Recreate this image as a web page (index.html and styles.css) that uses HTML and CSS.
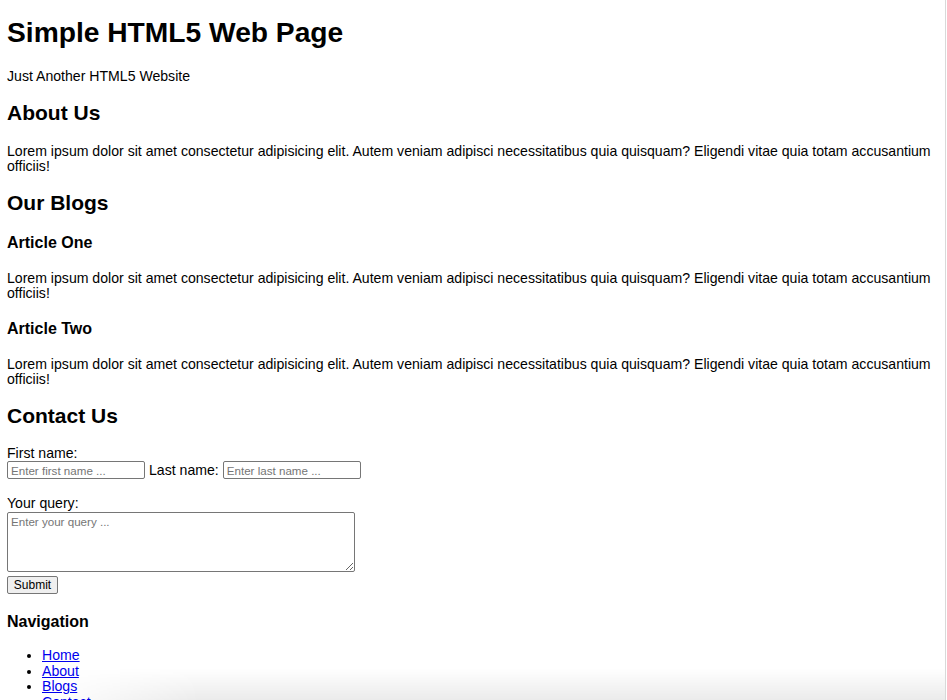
FILE: index.html
```html
<!DOCTYPE html>
<html lang="en">
<head>
<meta charset="utf-8">
<title>Simple HTML5 Web Page</title>
<link rel="stylesheet" href="styles.css">
</head>
<body>
<header class="site-header">
  <h1 class="site-title">Simple HTML5 Web Page</h1>
  <p class="tagline">Just Another HTML5 Website</p>
</header>
<main>
  <section class="block">
    <h2 class="section-title">About Us</h2>
    <p class="text">Lorem ipsum dolor sit amet consectetur adipisicing elit. Autem veniam adipisci necessitatibus quia quisquam? Eligendi vitae quia totam accusantium officiis!</p>
  </section>
  <section class="block">
    <h2 class="section-title">Our Blogs</h2>
    <article>
      <h3 class="article-title">Article One</h3>
      <p class="text">Lorem ipsum dolor sit amet consectetur adipisicing elit. Autem veniam adipisci necessitatibus quia quisquam? Eligendi vitae quia totam accusantium officiis!</p>
    </article>
    <article>
      <h3 class="article-title">Article Two</h3>
      <p class="text">Lorem ipsum dolor sit amet consectetur adipisicing elit. Autem veniam adipisci necessitatibus quia quisquam? Eligendi vitae quia totam accusantium officiis!</p>
    </article>
  </section>
  <section class="block">
    <h2 class="section-title">Contact Us</h2>
    <form class="contact-form">
      <div class="form-line"><label for="fname">First name:</label></div>
      <div class="form-row">
        <input class="field" id="fname" type="text" placeholder="Enter first name ...">
        <label for="lname">Last name:</label>
        <input class="field" id="lname" type="text" placeholder="Enter last name ...">
      </div>
      <div class="form-line query-label"><label for="query">Your query:</label></div>
      <textarea class="query" id="query" placeholder="Enter your query ..."></textarea>
      <div><button class="submit" type="button">Submit</button></div>
    </form>
  </section>
</main>
<footer class="site-footer">
  <h3 class="nav-title">Navigation</h3>
  <ul class="nav-list">
    <li><a href="#">Home</a></li>
    <li><a href="#">About</a></li>
    <li><a href="#">Blogs</a></li>
    <li><a href="#">Contact</a></li>
  </ul>
</footer>
<div class="edge"></div>
<div class="shade"></div>
</body>
</html>
```
FILE: styles.css
```css
html {
  overflow: hidden;
  background: #fff;
}
body {
  margin: 0 7px;
  font-family: "Liberation Sans", Arial, Helvetica, sans-serif;
  font-size: 14.1px;
  color: #000;
}
.site-title {
  font-size: 28.2px;
  line-height: 32px;
  margin: 16px 0 0;
  font-weight: bold;
}
.tagline {
  margin: 20px 0 0;
  line-height: 16px;
}
.section-title {
  font-size: 21px;
  line-height: 24px;
  margin: 17px 0 0;
  font-weight: bold;
}
.text {
  line-height: 15px;
  margin: 19px 0 0;
}
.article-title,
.nav-title {
  font-size: 16px;
  line-height: 18px;
  margin: 19px 0 0;
  font-weight: bold;
}
.contact-form {
  margin-top: 18px;
}
.form-line {
  line-height: 15px;
}
.form-row {
  display: flex;
  align-items: center;
  gap: 4px;
  margin-top: 0;
  line-height: 17px;
}
.field {
  box-sizing: border-box;
  width: 138px;
  height: 18px;
  margin: 0;
  padding: 0 3px;
  border: 1px solid #767676;
  border-radius: 2px;
  font-family: "Liberation Sans", Arial, sans-serif;
  font-size: 11.6px;
}
.field::placeholder,
.query::placeholder {
  color: #757575;
}
.query-label {
  margin-top: 17px;
}
.query {
  display: block;
  box-sizing: border-box;
  width: 348px;
  height: 60px;
  margin: 1px 0 0;
  padding: 2px 3px;
  border: 1px solid #767676;
  border-radius: 2px;
  font-family: "Liberation Sans", Arial, sans-serif;
  font-size: 11.6px;
}
.submit {
  box-sizing: border-box;
  width: 51px;
  height: 18px;
  margin: 4px 0 0;
  padding: 0;
  border: 1px solid #767676;
  border-radius: 2px;
  background: #efefef;
  font-family: "Liberation Sans", Arial, sans-serif;
  font-size: 12px;
  color: #000;
}
.site-footer .nav-title {
  margin-top: 19px;
}
.nav-list {
  margin: 17px 0 0;
  padding-left: 35px;
  line-height: 15.5px;
}
.nav-list a {
  color: #0000ee;
  text-decoration: underline;
}
.edge {
  position: fixed;
  top: 0;
  bottom: 0;
  left: 945px;
  width: 1px;
  background: #d9d9d9;
}
.shade {
  position: fixed;
  left: 40px;
  right: 2px;
  bottom: 0;
  height: 32px;
  background: linear-gradient(to bottom, rgba(0,0,0,0), rgba(0,0,0,0.08));
  -webkit-mask-image: linear-gradient(to right, transparent 0, #000 160px);
  mask-image: linear-gradient(to right, transparent 0, #000 160px);
  pointer-events: none;
}
```
